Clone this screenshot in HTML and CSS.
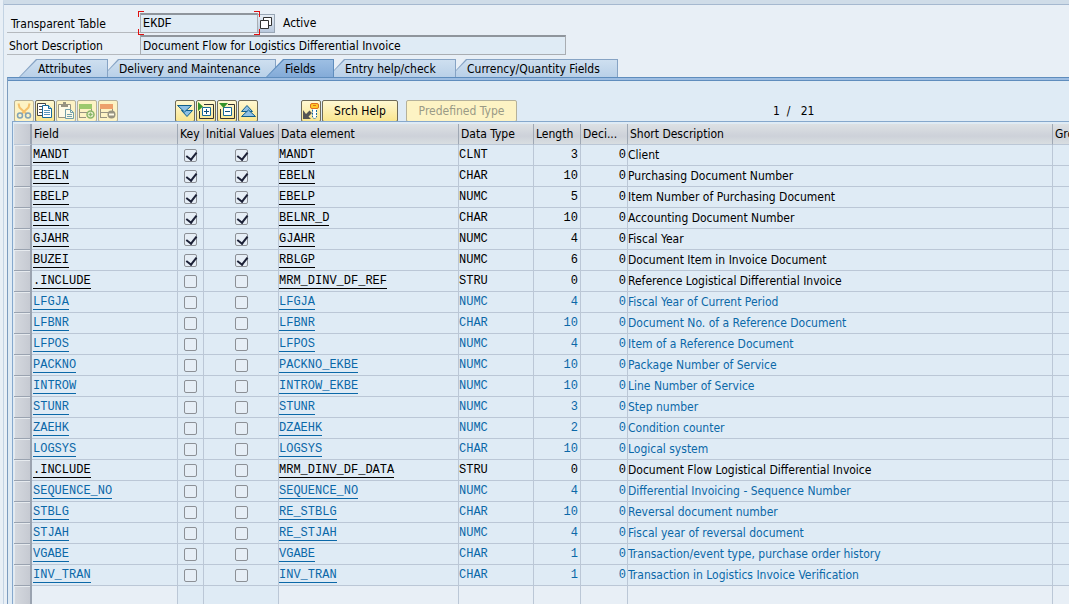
FILE: index.html
```html
<!DOCTYPE html>
<html lang="en">
<head>
<meta charset="utf-8">
<title>Dictionary: Display Table</title>
<link rel="stylesheet" href="styles.css">
</head>
<body>
<div class="window">
  <header class="head">
    <div class="line">
      <label class="label" for="table-name">Transparent Table</label>
      <span class="focus">
        <input class="input mono" id="table-name" type="text" value="EKDF" readonly>
        <i class="c tl"></i><i class="c tr"></i><i class="c bl"></i><i class="c br"></i>
      </span>
      <button class="match" type="button" aria-label="Value list"><svg width="16" height="16" viewBox="0 0 16 16"><path d="M5.500 2.500h8v8h-8z" fill="#fff" stroke="#333"/><path d="M2.500 5.500h8v8h-8z" fill="#fff" stroke="#333"/></svg></button>
      <span class="status">Active</span>
    </div>
    <div class="line">
      <label class="label second" for="short-text">Short Description</label>
      <input class="input wide" id="short-text" type="text" value="Document Flow for Logistics Differential Invoice" readonly>
    </div>
  </header>

  <nav class="tabs">
    <button class="tab full t1" type="button"><span>Attributes</span></button>
    <button class="tab t2" type="button"><span>Delivery and Maintenance</span></button>
    <button class="tab full t3 active" type="button"><span>Fields</span></button>
    <button class="tab t4" type="button"><span>Entry help/check</span></button>
    <button class="tab t5" type="button"><span>Currency/Quantity Fields</span></button>
  </nav>

  <main class="panel">
    <div class="toolbar">
      <div class="group">
        <button class="btn icon" type="button" disabled aria-label="Cut"><svg width="18" height="18" viewBox="0 0 18 18" fill="none"><path d="M3.500 1.500l1 4 7 6.500M14.500 1.500l-1 4-7 6.500" stroke="#f0a030" stroke-width="2"/><circle cx="5" cy="13.500" r="2.500" stroke="#2f6fae" stroke-width="1.500"/><circle cx="13" cy="13.500" r="2.500" stroke="#2f6fae" stroke-width="1.500"/></svg></button>
        <button class="btn icon" type="button" aria-label="Copy"><svg width="18" height="18" viewBox="0 0 18 18"><path d="M1.500 1.500h8v12h-8z" fill="#fff" stroke="#444"/><path d="M3 4.500h3M3 7.500h3M3 10.500h3" stroke="#555"/><path d="M6.500 3.500h6l3 3v9h-9z" fill="#fff" stroke="#176a9c"/><path d="M12.500 3.500v3h3" fill="#b8d8ec" stroke="#176a9c"/><path d="M8 8.500h6M8 10.500h6M8 12.500h6" stroke="#5a96bc"/></svg></button>
        <button class="btn icon" type="button" disabled aria-label="Paste"><svg width="18" height="18" viewBox="0 0 18 18"><path d="M1.500 2.500h12v13h-12z" fill="#fff" stroke="#555"/><path d="M4 2h2V0h3v2h2v3H4z" fill="#555"/><path d="M8.500 7.500h5l3 3v6h-8z" fill="#fff" stroke="#176a9c"/><path d="M13.500 7.500v3h3M10 12.500h5M10 14.500h5" fill="none" stroke="#176a9c"/></svg></button>
        <button class="btn icon" type="button" disabled aria-label="Insert row"><svg width="18" height="18" viewBox="0 0 18 18"><path d="M1 2h13v5H1z" fill="#5fae35"/><path d="M1 10.500h8M1 15.500h7M1.500 7v9M13.500 7v2" stroke="#555" fill="none"/><circle cx="12.500" cy="12.500" r="3.500" fill="#eef6e8" stroke="#3f8f2d" stroke-width="1.500"/><path d="M12.500 10.500v4M10.500 12.500h4" stroke="#3f8f2d" stroke-width="1.500"/></svg></button>
        <button class="btn icon" type="button" disabled aria-label="Delete row"><svg width="18" height="18" viewBox="0 0 18 18"><path d="M1 2h13v5H1z" fill="#e46a32"/><path d="M1 10.500h8M1 15.500h7M1.500 7v9M13.500 7v2" stroke="#555" fill="none"/><circle cx="12.500" cy="12.500" r="4" fill="#555"/><path d="M10 12.500h5" stroke="#fff" stroke-width="2"/></svg></button>
      </div>
      <div class="group g2">
        <button class="btn icon" type="button" aria-label="Expand all"><svg width="18" height="18" viewBox="0 0 18 18" fill="#8fc0e4" stroke="#0f5f8c"><path d="M5.500 8.500h11l-5.500 6z"/><path d="M1.500 3.500h14l-7 6.500z"/></svg></button>
        <button class="btn icon" type="button" aria-label="Expand include"><svg width="18" height="18" viewBox="0 0 18 18"><path d="M7 2.500h9.500v14H2.500V9" fill="none" stroke="#333"/><path d="M5.500 5.500h8v8h-8z" fill="#fff" stroke="#176a9c"/><path d="M7 9.500h5M9.500 7v5" stroke="#0f4f7c"/><path d="M1 0v9l5-4.500z" fill="#35932a"/></svg></button>
        <button class="btn icon" type="button" aria-label="Collapse include"><svg width="18" height="18" viewBox="0 0 18 18"><path d="M10 2.500h6.500v14H2.500V7" fill="none" stroke="#333"/><path d="M5.500 5.500h8v8h-8z" fill="#fff" stroke="#176a9c"/><path d="M7 9.500h5" stroke="#0f4f7c"/><path d="M1 1h9L5.500 6z" fill="#35932a"/></svg></button>
        <button class="btn icon" type="button" aria-label="Collapse all"><svg width="18" height="18" viewBox="0 0 18 18" fill="#8fc0e4" stroke="#0f5f8c"><path d="M2.500 9.500h11l-5.500-6z"/><path d="M2.500 14.500h14l-7-6.500z"/></svg></button>
      </div>
      <div class="group g3">
        <button class="btn icon" type="button" aria-label="Foreign key"><svg width="18" height="18" viewBox="0 0 18 18"><path d="M1 8v9h8l-2.500-2.500L10 11 7.500 8.500 4 12z" fill="#555"/><path d="M10.500 6h4v9l-2 2-2-2z" fill="#fff" stroke="#176a9c" stroke-dasharray="2 1"/><rect x="8.500" y="1.500" width="8" height="5" rx="1.500" fill="#ffc928" stroke="#e0701a"/><path d="M11 3.500h3" stroke="#e0701a"/></svg></button>
        <button class="btn text srch" type="button">Srch Help</button>
      </div>
      <button class="btn text pre" type="button" disabled>Predefined Type</button>
      <span class="pager">1&nbsp; /&nbsp;&nbsp; 21</span>
    </div>

    <div class="grid">
      <table>
        <colgroup><col class="w-sel"><col class="w-field"><col class="w-key"><col class="w-init"><col class="w-elem"><col class="w-type"><col class="w-len"><col class="w-dec"><col class="w-desc"><col class="w-group"></colgroup>
        <thead>
          <tr><th class="sel"></th><th>Field</th><th>Key</th><th>Initial Values</th><th>Data element</th><th>Data Type</th><th>Length</th><th>Deci...</th><th>Short Description</th><th>Gro</th></tr>
        </thead>
        <tbody id="rows"></tbody>
      </table>
    </div>
  </main>
</div>
<script src="rows.js"></script>
</body>
</html>
```

FILE: rows.js
```js
// name, key flag, data element, type, length, description, colour class
const fields = [
  ["MANDT", 1, "MANDT", "CLNT", 3, "Client", ""],
  ["EBELN", 1, "EBELN", "CHAR", 10, "Purchasing Document Number", ""],
  ["EBELP", 1, "EBELP", "NUMC", 5, "Item Number of Purchasing Document", ""],
  ["BELNR", 1, "BELNR_D", "CHAR", 10, "Accounting Document Number", ""],
  ["GJAHR", 1, "GJAHR", "NUMC", 4, "Fiscal Year", ""],
  ["BUZEI", 1, "RBLGP", "NUMC", 6, "Document Item in Invoice Document", ""],
  [".INCLUDE", 0, "MRM_DINV_DF_REF", "STRU", 0, "Reference Logistical Differential Invoice", ""],
  ["LFGJA", 0, "LFGJA", "NUMC", 4, "Fiscal Year of Current Period", "inc"],
  ["LFBNR", 0, "LFBNR", "CHAR", 10, "Document No. of a Reference Document", "inc"],
  ["LFPOS", 0, "LFPOS", "NUMC", 4, "Item of a Reference Document", "inc"],
  ["PACKNO", 0, "PACKNO_EKBE", "NUMC", 10, "Package Number of Service", "inc"],
  ["INTROW", 0, "INTROW_EKBE", "NUMC", 10, "Line Number of Service", "inc"],
  ["STUNR", 0, "STUNR", "NUMC", 3, "Step number", "inc"],
  ["ZAEHK", 0, "DZAEHK", "NUMC", 2, "Condition counter", "inc"],
  ["LOGSYS", 0, "LOGSYS", "CHAR", 10, "Logical system", "inc"],
  [".INCLUDE", 0, "MRM_DINV_DF_DATA", "STRU", 0, "Document Flow Logistical Differential Invoice", ""],
  ["SEQUENCE_NO", 0, "SEQUENCE_NO", "NUMC", 4, "Differential Invoicing - Sequence Number", "inc"],
  ["STBLG", 0, "RE_STBLG", "CHAR", 10, "Reversal document number", "inc"],
  ["STJAH", 0, "RE_STJAH", "NUMC", 4, "Fiscal year of reversal document", "inc"],
  ["VGABE", 0, "VGABE", "CHAR", 1, "Transaction/event type, purchase order history", "inc"],
  ["INV_TRAN", 0, "INV_TRAN", "CHAR", 1, "Transaction in Logistics Invoice Verification", "inc"]
];

const check = (label, on) =>
  `<td class="chk"><input type="checkbox" aria-label="${label}"${on ? " checked" : ""}></td>`;

document.getElementById("rows").innerHTML = fields.map(([name, key, elem, type, len, desc, cls]) =>
  `<tr class="${cls}"><td class="sel"></td><td class="mono name"><a href="#">${name}</a></td>` +
  check("Key " + name, key) + check("Initial value " + name, key) +
  `<td class="mono"><a href="#">${elem}</a></td><td class="mono">${type}</td>` +
  `<td class="mono num">${len}</td><td class="mono num dec">0</td><td>${desc}</td><td></td></tr>`
).join("") + `<tr class="empty"><td class="sel"></td>${"<td></td>".repeat(9)}</tr>`;
```

FILE: styles.css
```css
* { box-sizing: border-box; }
html, body { height: 100%; }
body {
  margin: 0;
  overflow: hidden;
  background: #e8eff6;
  color: #000;
  font: 12px/16px "DejaVu Sans Condensed", "DejaVu Sans", sans-serif;
}
button, input { font: inherit; color: inherit; margin: 0; }
.mono { font-family: "Liberation Mono", monospace; font-size: 12px; }

.window {
  height: 100%;
  display: flex;
  flex-direction: column;
  border-top: 4px solid #cfdce8;
  margin-left: 3px;
  border-left: 1px solid #c3d3e3;
  box-shadow: inset 0 1px #a5b8cf;
}
.head { padding: 8px 0 0 3px; }
.line { display: flex; height: 22px; align-items: center; }
.label {
  align-self: flex-start;
  width: 133px;
  height: 21px;
  padding: 4px 0 0 4px;
  border-bottom: 1px solid #b5b9be;
}
.label.second { padding-left: 2px; }
.input {
  height: 20px;
  padding: 0 2px;
  border: 1px solid #a9adb2;
  border-top: 2px solid #8f959c;
  border-radius: 0;
  background: #dfebf5;
  outline: 0;
}
.focus { position: relative; display: flex; }
.focus .input { width: 118px; }
.input.wide { width: 426px; }
.c { position: absolute; width: 6px; height: 6px; border: 0 solid #e01010; }
.tl { left: -2px; top: -2px; border-width: 1px 0 0 1px; }
.tr { right: -2px; top: -2px; border-width: 1px 1px 0 0; }
.bl { left: -2px; bottom: -2px; border-width: 0 0 1px 1px; }
.br { right: -2px; bottom: -2px; border-width: 0 1px 1px 0; }
.match {
  width: 17px;
  height: 19px;
  padding: 0;
  display: flex;
  align-items: center;
  border: 1px solid #98a6b5;
  border-left: 0;
  background: linear-gradient(#e6edf5, #b8c8dc);
}
.status { padding-left: 8px; }

.tabs { display: flex; height: 18px; margin: 3px 0 0 15px; }
.tab {
  height: 18px;
  padding: 0;
  border: 0;
  background: #86a3c4;
  clip-path: polygon(0 100%, 0 11px, 10px 0, 100% 0, 100% 100%);
}
.tab span {
  display: flex;
  height: 18px;
  align-items: center;
  padding: 2px 0 0 11px;
  background: linear-gradient(#cfe0f0, #b9d0e8);
  clip-path: polygon(0 100%, 0 12px, 11px 1px, calc(100% - 1px) 1px, calc(100% - 1px) 100%);
}
.full { clip-path: polygon(0 100%, 17px 0, 100% 0, 100% 100%); }
.full span {
  padding-left: 19px;
  clip-path: polygon(1px 100%, 18px 1px, calc(100% - 1px) 1px, calc(100% - 1px) 100%);
}
.t1 { width: 89px; }
.t2 { width: 168px; }
.t3 { width: 68px; margin-left: -10px; }
.t4 { width: 122px; }
.t5 { width: 162px; }
.active { background: #5f8dbd; }
.active span { background: linear-gradient(#9fc0e4, #84abd8); }

.panel {
  flex: 1;
  min-height: 0;
  display: flex;
  flex-direction: column;
  margin-left: 3px;
  padding: 19px 0 0 4px;
  background: #dfebf5;
  border-left: 1px solid #7d9cbf;
  border-top: 1px solid #5f8dbd;
  box-shadow: inset 0 2px #9dbde2, inset 0 3px #5f8dbd;
  padding-top: 22px;
}
.toolbar { display: flex; align-items: flex-start; height: 21px; padding-left: 2px; }
.group { display: flex; }
.g2 { margin-left: 56px; }
.g3 { margin-left: 42px; }
.btn {
  height: 22px;
  padding: 0;
  border: 1px solid #6f6b58;
  border-radius: 2px;
  background: linear-gradient(#fff8d2, #fae68f);
}
.icon { width: 20px; margin-right: 1px; display: flex; align-items: center; justify-content: center; }
.icon svg { flex: none; }
.btn:disabled { border-color: #b5b19a; color: #9a9a86; background: #fdf3c4; }
.icon:disabled svg { opacity: .6; }
.srch { width: 76px; }
.pre { width: 111px; margin-left: 8px; }
.pager { margin-left: 256px; padding-top: 3px; }

.grid {
  flex: 1;
  min-height: 0;
  overflow: hidden;
  padding: 2px 0 0 1px;
  border-left: 1px solid #86a8cc;
  border-top: 1px solid #86a8cc;
}
table { width: 100%; table-layout: fixed; border-collapse: separate; border-spacing: 0; }
.w-sel { width: 18px; }
.w-field { width: 146px; }
.w-key { width: 26px; }
.w-init { width: 75px; }
.w-elem { width: 180px; }
.w-type { width: 75px; }
.w-len { width: 47px; }
.w-dec { width: 47px; }
.w-group { width: 16px; }
th, td {
  height: 21px;
  padding: 0;
  border-right: 1px solid #bbc7d6;
  border-bottom: 1px solid #bbc7d6;
  white-space: nowrap;
  overflow: hidden;
}
th {
  padding-left: 2px;
  text-align: left;
  font-weight: normal;
  background: linear-gradient(#dde1e4, #cdd1d9 60%, #d9dee1);
  border-right-color: #9fa8b4;
}
td:last-child, th:last-child { border-right: 0; }
.sel {
  background: linear-gradient(90deg, #d5d9df, #c6cad2);
  border-right: 2px solid #9aa3b0;
}
td.sel { border-bottom-color: #9aa3b0; box-shadow: inset 1px 1px #e6eaee; }
.name { padding-left: 1px; }
.num { text-align: right; padding-right: 2px; }
.dec { padding-right: 1px; }
.chk { text-align: center; }
td a { color: inherit; text-decoration: none; border-bottom: 1px solid; }
.inc { color: #0b68a8; }
.empty td:not(.sel) { background: #e8eff6; }
.empty td:nth-child(3), .empty td:nth-child(4) { background: #dfebf5; }
input[type="checkbox"] {
  appearance: none;
  display: block;
  width: 13px;
  height: 13px;
  margin: 0 auto;
  border: 1px solid #8c9096;
  border-radius: 2px;
  background: #e6eef6;
}
input[type="checkbox"]:checked {
  background: #e6eef6 linear-gradient(#e6eef6, #e6eef6);
}
input[type="checkbox"]:checked::after {
  content: "";
  display: block;
  width: 5px;
  height: 8px;
  margin: 0 0 0 3px;
  border: solid #1b2036;
  border-width: 0 2px 2px 0;
  transform: rotate(38deg);
}
```
